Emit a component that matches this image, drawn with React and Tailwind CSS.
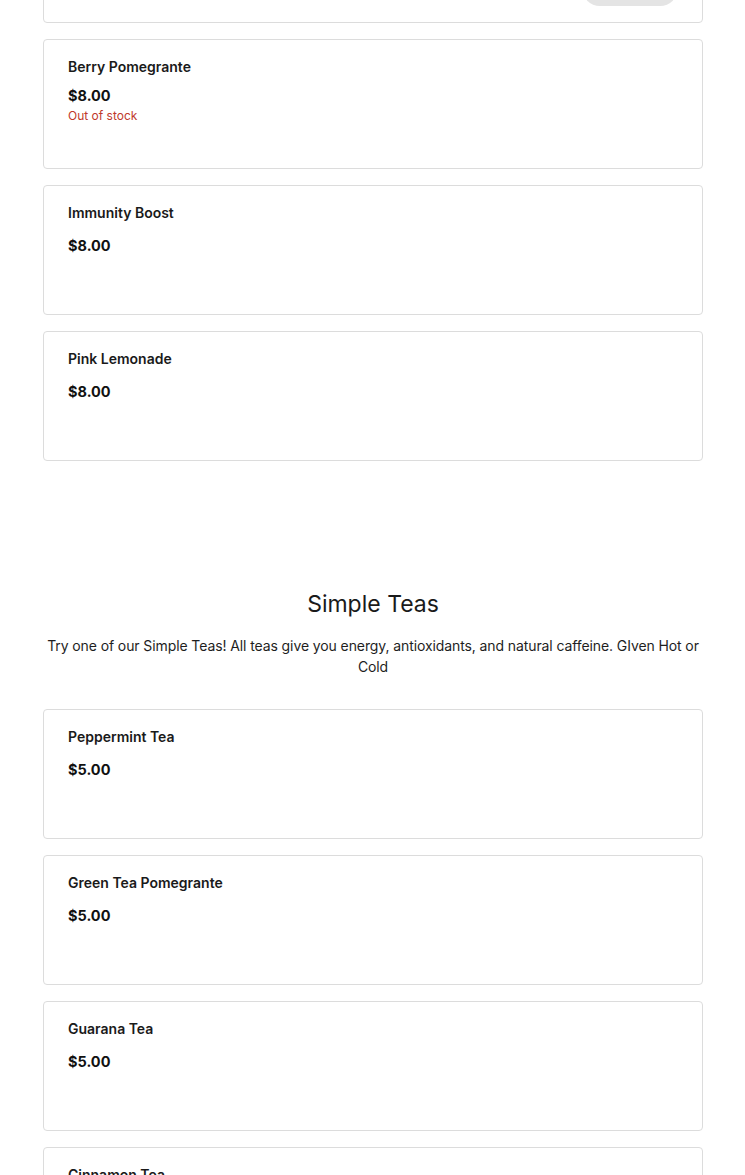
import React from 'react';

// ── Data ──────────────────────────────────────────────────────────────────────

const refreshers = [
    { name: 'Berry Pomegrante', price: '$8.00', outOfStock: true },
    { name: 'Immunity Boost', price: '$8.00' },
    { name: 'Pink Lemonade', price: '$8.00' },
];

const teas = [
    { name: 'Peppermint Tea', price: '$5.00' },
    { name: 'Green Tea Pomegrante', price: '$5.00' },
    { name: 'Guarana Tea', price: '$5.00' },
    { name: 'Cinnamon Tea', price: '$5.00' },
];

// ── Card ──────────────────────────────────────────────────────────────────────

function MenuCard({ item }) {
    return (
        <div className="h-[130px] shrink-0 border border-[#dcdcdc] rounded-[4px] bg-white px-6 pt-[17px]">
            <p className="text-[14px] leading-5 font-semibold text-[#1a1a1a]">{item.name}</p>
            <p className={`text-[14.5px] leading-5 font-bold text-[#111] ${item.outOfStock ? 'mt-[9px]' : 'mt-[13px]'}`}>
                {item.price}
            </p>
            {item.outOfStock && (
                <p className="text-[12px] leading-4 text-[#c0392b] mt-[2px]">Out of stock</p>
            )}
        </div>
    );
}

export default function App() {
    return (
        <div
            className="w-[745px] h-[1175px] overflow-hidden bg-white"
            style={{ fontFamily: 'Inter, "Liberation Sans", sans-serif' }}
        >
            <div className="mx-[43px] w-[660px] flex flex-col gap-4 -mt-[108px]">
                {/* Cut-off card at top */}
                <div className="h-[131px] shrink-0 border border-[#dcdcdc] rounded-[4px] bg-white flex items-end justify-end px-6 pb-[16px]">
                    <div className="w-[96px] h-[36px] rounded-full bg-[#e4e4e4]" />
                </div>
                {refreshers.map(item => (
                    <MenuCard key={item.name} item={item} />
                ))}
            </div>

            {/* Simple Teas section */}
            <div className="mx-[43px] w-[660px] pt-[127px]">
                <h2 className="text-center text-[23px] leading-8 text-[#1a1a1a]">Simple Teas</h2>
                <p className="mt-[15px] text-center text-[14px] leading-[21px] tracking-[-0.1px] text-[#1e1e1e]">
                    Try one of our Simple Teas! All teas give you energy, antioxidants, and natural caffeine. GIven Hot or Cold
                </p>
                <div className="mt-[32px] flex flex-col gap-4">
                    {teas.map(item => (
                        <MenuCard key={item.name} item={item} />
                    ))}
                </div>
            </div>
        </div>
    );
}
